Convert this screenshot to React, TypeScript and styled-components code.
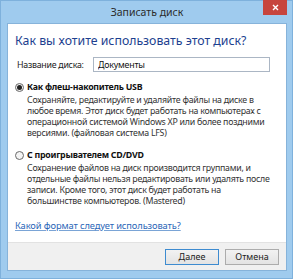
import React from "react";
import styled, { createGlobalStyle } from "styled-components";

const GlobalStyle = createGlobalStyle`
  html, body {
    margin: 0;
    padding: 0;
    background: #9fcbee;
  }
  body {
    font-family: "Noto Sans", "Open Sans", sans-serif;
  }
`;

const App = () => {
  return (
    <>
      <GlobalStyle />
      <Window>
        <TitleBar>
          <span />
          <Title>Записать диск</Title>
          <CloseButton aria-label="Закрыть">
            <svg width="7" height="7" viewBox="0 0 7 7">
              <path d="M1 1L6 6M6 1L1 6" stroke="#fff" strokeWidth="1.4" />
            </svg>
          </CloseButton>
        </TitleBar>
        <Body>
          <Content>
            <Heading>Как вы хотите использовать этот диск?</Heading>
            <NameRow>
              <Label>Название диска:</Label>
              <Input defaultValue="Документы" />
            </NameRow>
            <Option>
              <OptionHead>
                <Radio $checked />
                <OptionTitle>Как флеш-накопитель USB</OptionTitle>
              </OptionHead>
              <Description>
                Сохраняйте, редактируйте и удаляйте файлы на диске в
                <br />
                любое время. Этот диск будет работать на компьютерах с
                <br />
                операционной системой Windows XP или более поздними
                <br />
                версиями. (файловая система LFS)
              </Description>
            </Option>
            <Option>
              <OptionHead>
                <Radio />
                <OptionTitle>С проигрывателем CD/DVD</OptionTitle>
              </OptionHead>
              <Description>
                Сохранение файлов на диск производится группами, и
                <br />
                отдельные файлы нельзя редактировать или удалять после
                <br />
                записи. Кроме того, этот диск будет работать на
                <br />
                большинстве компьютеров. (Mastered)
              </Description>
            </Option>
            <HelpLink href="#">Какой формат следует использовать?</HelpLink>
          </Content>
          <Footer>
            <Button $primary>Далее</Button>
            <Button>Отмена</Button>
          </Footer>
        </Body>
      </Window>
    </>
  );
};

export default App;

const Window = styled.div`
  width: 293px;
  height: 279px;
  box-sizing: border-box;
  display: flex;
  flex-direction: column;
  background: #9fcbee;
  border: 1px solid #7eb1dc;
  padding: 0 5px 7px 6px;
`;

const TitleBar = styled.div`
  height: 22px;
  display: grid;
  grid-template-columns: 1fr auto 1fr;
  align-items: start;
`;

const Title = styled.div`
  margin-top: 5px;
  font-size: 10.5px;
  line-height: 13px;
  color: #2b2b2b;
`;

const CloseButton = styled.div`
  justify-self: end;
  width: 24px;
  height: 15px;
  margin-top: -1px;
  background: #c7453d;
  display: flex;
  align-items: center;
  justify-content: center;
`;

const Body = styled.div`
  flex: 1;
  display: flex;
  flex-direction: column;
  background: #fff;
  border: 1px solid #86b3da;
`;

const Content = styled.div`
  flex: 1;
  padding: 9px 16px 0 7px;
  display: flex;
  flex-direction: column;
  align-items: flex-start;
`;

const Heading = styled.div`
  font-size: 12.3px;
  line-height: 16px;
  color: #1d3f8f;
  margin-bottom: 8px;
`;

const NameRow = styled.div`
  align-self: stretch;
  display: flex;
  align-items: center;
  padding-left: 2px;
  margin-bottom: 9px;
`;

const SmallText = styled.div`
  font-size: 8.8px;
  letter-spacing: -0.25px;
  white-space: nowrap;
`;

const Label = styled(SmallText)`
  width: 76px;
  color: #222;
`;

const Input = styled.input`
  flex: 1;
  height: 15px;
  box-sizing: border-box;
  border: 1px solid #abb6c4;
  padding: 0 4px;
  font-family: inherit;
  font-size: 8.8px;
  letter-spacing: -0.2px;
  color: #111;
  outline: none;
`;

const Option = styled.div`
  display: flex;
  flex-direction: column;
  margin-bottom: 10px;
`;

const OptionHead = styled.div`
  display: flex;
  align-items: center;
  gap: 3px;
`;

const Radio = styled.span<{ $checked?: boolean }>`
  width: 9px;
  height: 9px;
  box-sizing: border-box;
  border-radius: 50%;
  border: 1px solid #6a6a6a;
  background: #f4f4f4;
  display: inline-flex;
  align-items: center;
  justify-content: center;
  &::after {
    content: "";
    width: 5px;
    height: 5px;
    border-radius: 50%;
    background: ${(p) => (p.$checked ? "#222" : "transparent")};
  }
`;

const OptionTitle = styled(SmallText)`
  line-height: 12px;
  font-weight: bold;
  color: #111;
`;

const Description = styled(SmallText)`
  margin-top: 2px;
  padding-left: 12px;
  line-height: 11px;
  color: #333;
`;

const HelpLink = styled.a`
  margin-top: 2px;
  font-size: 9.3px;
  line-height: 13px;
  letter-spacing: -0.1px;
  color: #2a66b8;
  text-decoration: underline;
  text-decoration-color: #7aa4d6;
`;

const Footer = styled.div`
  height: 27px;
  background: #f0f0f0;
  border-top: 1px solid #e2e2e2;
  display: flex;
  justify-content: flex-end;
  align-items: center;
  gap: 6px;
  padding-right: 7px;
`;

const Button = styled.div<{ $primary?: boolean }>`
  width: 54px;
  height: 16px;
  box-sizing: border-box;
  display: flex;
  align-items: center;
  justify-content: center;
  font-size: 9px;
  color: #222;
  background: linear-gradient(#f2f2f2, #e3e3e3);
  border: 1px solid ${(p) => (p.$primary ? "#3d8bd0" : "#acacac")};
`;
